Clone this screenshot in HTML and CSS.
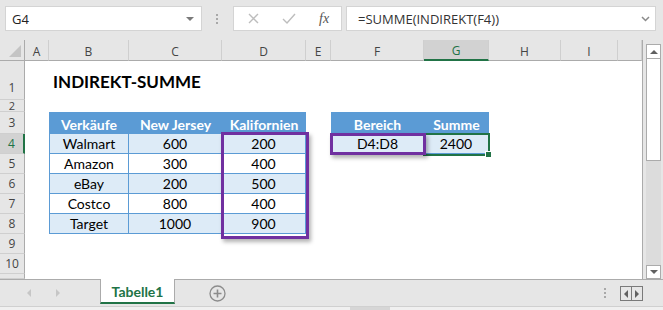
FILE: index.html
```html
<!DOCTYPE html>
<html lang="de">
<head>
    <meta charset="UTF-8">
    <title>INDIREKT-SUMME</title>
    <link rel="stylesheet" href="styles.css">
</head>
<body>
    <div class="app">
        <div class="formula-bar">
            <div class="name-box"><span>G4</span><span class="caret"></span></div>
            <div class="grip"></div>
            <div class="fx-box">
                <svg class="ico-x" width="11" height="11" viewBox="0 0 11 11"><path d="M1 1L10 10M10 1L1 10" stroke="#bdbdbd" stroke-width="1.4" fill="none"/></svg>
                <svg class="ico-ok" width="14" height="11" viewBox="0 0 14 11"><path d="M1 6L5 10L13 1" stroke="#bdbdbd" stroke-width="1.4" fill="none"/></svg>
                <span class="fx">fx</span>
            </div>
            <div class="formula">
                <span>=SUMME(INDIREKT(F4))</span>
                <svg width="9" height="6" viewBox="0 0 9 6"><path d="M1 1L4.5 4.5L8 1" stroke="#8a8a8a" stroke-width="1.5" fill="none"/></svg>
            </div>
        </div>

        <div class="main">
            <div class="sheet">
                <div class="corner"></div>
                <div class="ch">A</div>
                <div class="ch">B</div>
                <div class="ch">C</div>
                <div class="ch">D</div>
                <div class="ch">E</div>
                <div class="ch">F</div>
                <div class="ch sel">G</div>
                <div class="ch">H</div>
                <div class="ch">I</div>
                <div class="ch"></div>

                <div class="rh rh-bottom">1</div><div></div>
                <div class="title">INDIREKT-SUMME</div>

                <div class="rh short">2</div>

                <div class="rh">3</div><div></div>
                <div class="th first">Verkäufe</div>
                <div class="th">New Jersey</div>
                <div class="th">Kalifornien</div>
                <div></div>
                <div class="th first">Bereich</div>
                <div class="th">Summe</div>

                <div class="rh sel">4</div><div></div>
                <div class="td first alt">Walmart</div>
                <div class="td alt">600</div>
                <div class="td alt">200</div>
                <div></div>
                <div class="td first alt">D4:D8</div>
                <div class="td alt">2400</div>

                <div class="rh">5</div><div></div>
                <div class="td first">Amazon</div>
                <div class="td">300</div>
                <div class="td">400</div>

                <div class="rh">6</div><div></div>
                <div class="td first alt">eBay</div>
                <div class="td alt">200</div>
                <div class="td alt">500</div>

                <div class="rh">7</div><div></div>
                <div class="td first">Costco</div>
                <div class="td">800</div>
                <div class="td">400</div>

                <div class="rh">8</div><div></div>
                <div class="td first alt">Target</div>
                <div class="td alt">1000</div>
                <div class="td alt">900</div>

                <div class="rh">9</div>
                <div class="rh">10</div>
                <div class="rh"></div>

                <!-- markings drawn over the cells -->
                <div class="mark mark-range"></div>
                <div class="selection"><span class="handle"></span></div>
                <div class="mark mark-ref"></div>
            </div>

            <div class="vscroll">
                <div class="sb-btn"><span class="tri-up"></span></div>
                <div class="thumb"></div>
                <div class="track"></div>
                <div class="sb-btn down"><span class="tri-down"></span></div>
            </div>
        </div>

        <div class="tabbar">
            <div class="tab-nav">
                <span class="nav-left"></span>
                <span class="nav-right"></span>
            </div>
            <div class="tab">Tabelle1</div>
            <div class="add-sheet">
                <svg width="17" height="17" viewBox="0 0 17 17"><circle cx="8.5" cy="8.5" r="7.5" stroke="#8c8c8c" stroke-width="1.3" fill="none"/><path d="M8.5 4.5V12.5M4.5 8.5H12.5" stroke="#8c8c8c" stroke-width="1.6"/></svg>
            </div>
            <div class="spacer"></div>
            <div class="grip small"></div>
            <div class="split-box">
                <span><i class="tri-left"></i></span>
                <span><i class="tri-right"></i></span>
            </div>
        </div>
        <div class="hscroll"><div class="hthumb"></div></div>
    </div>
</body>
</html>
```

FILE: styles.css
```css
body {
    margin: 0;
    font-family: 'Open Sans', sans-serif;
    background: #e6e6e6;
}

.app {
    width: 663px;
    height: 310px;
    overflow: hidden;
    background: #e6e6e6;
}

/* formula bar */

.formula-bar {
    display: flex;
    align-items: flex-start;
    height: 40px;
    padding: 6px 0 0 5px;
    box-sizing: border-box;
}

.name-box {
    width: 197px;
    height: 25px;
    box-sizing: border-box;
    border: 1px solid #d4d4d4;
    background: #fff;
    display: flex;
    align-items: center;
    justify-content: space-between;
    padding: 0 7px 0 6px;
    font-size: 13px;
    color: #222;
}

.caret {
    border-left: 4px solid transparent;
    border-right: 4px solid transparent;
    border-top: 4px solid #7a7a7a;
}

.grip {
    width: 2px;
    height: 10px;
    margin: 8px 0 0 14px;
    background: repeating-linear-gradient(#a8a8a8 0 2px, transparent 2px 4px);
}

.fx-box {
    width: 109px;
    height: 25px;
    margin-left: 15px;
    box-sizing: border-box;
    border: 1px solid #d4d4d4;
    background: #fff;
    display: flex;
    align-items: center;
}

.ico-x {
    margin-left: 14px;
}

.ico-ok {
    margin-left: 23px;
}

.fx {
    margin-left: 23px;
    font-family: 'Liberation Serif', serif;
    font-style: italic;
    font-size: 14px;
    color: #555;
}

.formula {
    width: 310px;
    height: 25px;
    margin-left: 4px;
    box-sizing: border-box;
    border: 1px solid #d4d4d4;
    background: #fff;
    display: flex;
    align-items: center;
    justify-content: space-between;
    padding: 0 5px 0 11px;
    font-size: 13px;
    color: #333;
}

/* sheet grid */

.main {
    display: flex;
    height: 239px;
}

.sheet {
    position: relative;
    width: 643px;
    box-sizing: border-box;
    border-right: 1px solid #ababab;
    background: #fff;
    display: grid;
    grid-template-columns: 25px 24px 80px 93px 84px 25px 93px 65px 72px 57px 24px;
    grid-template-rows: 21px 39px 12px 22px repeat(7, 20px) 5px;
    font-family: Lato, sans-serif;
    font-size: 14px;
}

.corner {
    position: relative;
    background: #e6e6e6;
    border-bottom: 1px solid #ababab;
    border-right: 1px solid #ababab;
}

.corner::after {
    content: "";
    position: absolute;
    right: 3px;
    bottom: 3px;
    width: 12px;
    height: 12px;
    background: #c4c4c4;
    clip-path: polygon(100% 0, 100% 100%, 0 100%);
}

.ch {
    background: #e6e6e6;
    border-bottom: 1px solid #ababab;
    border-right: 1px solid #cfcfcf;
    display: flex;
    align-items: center;
    justify-content: center;
    padding-top: 2px;
    font-family: 'Open Sans', sans-serif;
    font-size: 12px;
    color: #444;
}

.ch.sel {
    background: #d2d2d2;
    color: #217346;
    border-bottom: 2px solid #217346;
}

.rh {
    grid-column: 1;
    background: #e6e6e6;
    border-bottom: 1px solid #cfcfcf;
    border-right: 1px solid #ababab;
    display: flex;
    align-items: center;
    justify-content: center;
    font-family: 'Open Sans', sans-serif;
    font-size: 12px;
    line-height: 16px;
    color: #444;
}

.rh.short {
    font-size: 11px;
    line-height: 11px;
}

.rh-bottom {
    align-items: flex-end;
    padding-bottom: 3px;
}

.rh.sel {
    background: #d2d2d2;
    color: #217346;
    border-right: 2px solid #217346;
}

.title {
    grid-column: span 3;
    display: flex;
    align-items: center;
    padding: 2px 0 0 4px;
    white-space: nowrap;
    font-size: 17px;
    font-weight: bold;
    color: #000;
}

.th {
    background: #5b9bd5;
    color: #fff;
    font-weight: bold;
    display: flex;
    align-items: center;
    justify-content: center;
    padding-top: 3px;
}

.td {
    display: flex;
    align-items: center;
    justify-content: center;
    border-right: 1px solid #5b9bd5;
    border-bottom: 1px solid #5b9bd5;
    color: #000;
}

.td.first {
    border-left: 1px solid #5b9bd5;
}

.td.alt {
    background: #ddebf7;
}

/* overlays */

.mark {
    position: absolute;
    box-sizing: border-box;
    border: 3px solid #7030a0;
    box-shadow: 2px 3px 4px rgba(0, 0, 0, 0.3);
}

.mark-range {
    left: 221px;
    top: 92px;
    width: 88px;
    height: 107px;
}

.mark-ref {
    left: 330px;
    top: 93px;
    width: 96px;
    height: 22px;
}

.selection {
    position: absolute;
    left: 423px;
    top: 93px;
    width: 67px;
    height: 23px;
    box-sizing: border-box;
    border: 2px solid #217346;
}

.handle {
    position: absolute;
    right: -4px;
    bottom: -4px;
    width: 5px;
    height: 5px;
    background: #217346;
    border: 1px solid #fff;
}

/* vertical scrollbar */

.vscroll {
    width: 20px;
    display: flex;
    flex-direction: column;
    padding: 4px 2px 0 3px;
    box-sizing: border-box;
}

.sb-btn {
    height: 15px;
    box-sizing: border-box;
    border: 1px solid #ababab;
    background: #fff;
    display: flex;
    align-items: center;
    justify-content: center;
}

.sb-btn.down {
    height: 14px;
}

.tri-up {
    border-left: 4px solid transparent;
    border-right: 4px solid transparent;
    border-bottom: 4px solid #606060;
}

.tri-down {
    border-left: 4px solid transparent;
    border-right: 4px solid transparent;
    border-top: 4px solid #606060;
}

.thumb {
    height: 102px;
    box-sizing: border-box;
    border: 1px solid #ababab;
    border-top: none;
    background: #fff;
}

.track {
    flex: 1;
    background: #dcdcdc;
}

/* sheet tabs */

.tabbar {
    display: flex;
    align-items: flex-start;
    height: 27px;
    box-sizing: border-box;
    border-top: 1px solid #ababab;
}

.tab-nav {
    width: 100px;
    height: 26px;
    display: flex;
    align-items: center;
    padding-left: 27px;
    box-sizing: border-box;
}

.nav-left {
    border-top: 4px solid transparent;
    border-bottom: 4px solid transparent;
    border-right: 4px solid #c6c6c6;
}

.nav-right {
    margin-left: 25px;
    border-top: 4px solid transparent;
    border-bottom: 4px solid transparent;
    border-left: 4px solid #c6c6c6;
}

.tab {
    width: 75px;
    height: 25px;
    margin-top: -1px;
    box-sizing: border-box;
    background: #fff;
    border-left: 1px solid #ababab;
    border-right: 1px solid #ababab;
    border-bottom: 2px solid #217346;
    display: flex;
    align-items: center;
    justify-content: center;
    padding-top: 2px;
    font-family: Lato, sans-serif;
    font-size: 14px;
    font-weight: bold;
    color: #217346;
}

.add-sheet {
    margin: 5px 0 0 34px;
    height: 17px;
}

.spacer {
    flex: 1;
}

.grip.small {
    margin: 8px 14px 0 0;
}

.split-box {
    display: flex;
    margin: 6px 20px 0 0;
    border: 1px solid #7a7a7a;
}

.split-box span {
    width: 10px;
    height: 13px;
    display: flex;
    align-items: center;
    justify-content: center;
}

.split-box span + span {
    border-left: 1px solid #7a7a7a;
}

.tri-left {
    border-top: 4px solid transparent;
    border-bottom: 4px solid transparent;
    border-right: 4px solid #606060;
}

.tri-right {
    border-top: 4px solid transparent;
    border-bottom: 4px solid transparent;
    border-left: 4px solid #606060;
}

.hscroll {
    height: 4px;
    border-top: 1px solid #d0d0d0;
    background: #f0f0f0;
    padding-left: 350px;
}

.hthumb {
    width: 40px;
    height: 4px;
    background: #d6d6d6;
}
```
